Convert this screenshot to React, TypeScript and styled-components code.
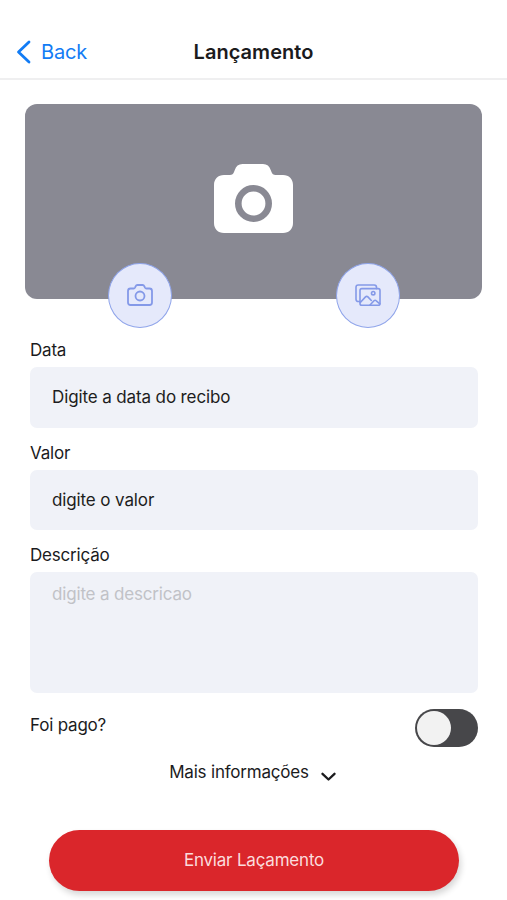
import React from "react";
import styled, { createGlobalStyle } from "styled-components";

const GlobalStyle = createGlobalStyle`
  * { box-sizing: border-box; }
  html, body { margin: 0; background: #fff; }
  body { font-family: Inter, "Liberation Sans", sans-serif; color: #1b1b1d; overflow: hidden; }
  button, input, textarea { font-family: inherit; }
`;

const Screen = styled.main`
  width: 507px;
  height: 900px;
  display: flex;
  flex-direction: column;
  overflow: hidden;
  background: #fff;
`;

const Header = styled.header`
  height: 80px;
  padding: 26px 16px 0;
  display: grid;
  grid-template-columns: 1fr auto 1fr;
  align-items: center;
  border-bottom: 2px solid #efeff0;
`;

const BackButton = styled.button`
  display: flex;
  align-items: center;
  gap: 10px;
  padding: 0;
  border: 0;
  background: none;
  color: #127cf5;
  font-size: 20px;
  letter-spacing: -0.15px;
  line-height: 26px;
`;

const Title = styled.h1`
  margin: 0;
  font-size: 20px;
  font-weight: 600;
  line-height: 26px;
  letter-spacing: 0.03px;
`;

const Photo = styled.section`
  position: relative;
  flex: none;
  height: 195px;
  margin: 24px 25px 0;
  border-radius: 12px;
  background: #898993;
  display: flex;
  justify-content: center;
  padding-top: 60px;
`;

const RoundButton = styled.button<{ $left: number }>`
  position: absolute;
  left: ${(p) => p.$left}px;
  top: 159px;
  width: 64px;
  height: 65px;
  padding: 0 0 1px;
  border: 1.5px solid #8fa4ea;
  border-radius: 50%;
  background: #e5e9fb;
  color: #8499e8;
  display: flex;
  align-items: center;
  justify-content: center;
`;

const Form = styled.form`
  padding: 41px 29px 0 30px;
  display: flex;
  flex-direction: column;
`;

const Field = styled.label`
  display: flex;
  flex-direction: column;
  gap: 6px;
  margin-bottom: 15px;
`;

const Caption = styled.span`
  font-size: 17px;
  line-height: 21px;
  letter-spacing: -0.2px;
`;

const Input = styled.input`
  width: 100%;
  height: 60.6px;
  padding: 0 22px;
  border: 0;
  border-radius: 7px;
  background: #f0f2f8;
  font-size: 17px;
  letter-spacing: -0.12px;
  &::placeholder { color: #1d1d20; opacity: 1; }
`;

const TextArea = styled.textarea`
  width: 100%;
  height: 121px;
  padding: 11px 22px;
  border: 0;
  border-radius: 7px;
  background: #f0f2f8;
  resize: none;
  font-size: 17px;
  line-height: 22px;
  letter-spacing: -0.17px;
  &::placeholder { color: #c1c2c7; opacity: 1; }
`;

const PaidRow = styled.div`
  display: flex;
  justify-content: space-between;
  height: 38px;
  margin-top: 0.6px;
`;

const PaidLabel = styled(Caption)`
  padding-top: 6px;
`;

const Toggle = styled.button`
  width: 63px;
  height: 38px;
  padding: 2px;
  border: 0;
  border-radius: 19px;
  background: #47474a;
`;

const Knob = styled.span`
  display: block;
  width: 34px;
  height: 34px;
  border-radius: 50%;
  background: #f2f2f2;
`;

const MoreButton = styled.button`
  align-self: center;
  display: flex;
  gap: 12px;
  margin: 15px 3px 0 0;
  padding: 0;
  border: 0;
  background: none;
  color: inherit;
  svg { margin-top: 10px; }
`;

const Submit = styled.button`
  height: 61px;
  margin: 47px 19px 0;
  padding: 0;
  border: 0;
  border-radius: 31px;
  background: #da262b;
  box-shadow: 2px 4px 6px rgba(0, 0, 0, 0.16);
  color: #fbdcdd;
  font-size: 17px;
  letter-spacing: -0.2px;
`;

export default function App() {
  return (
    <>
      <GlobalStyle />
      <Screen>
        <Header>
          <BackButton type="button">
            <svg width="15" height="24" viewBox="0 0 15 24" fill="none" stroke="currentColor" strokeWidth="2.8" strokeLinecap="round" strokeLinejoin="round">
              <path d="M13 2 2.5 12 13 22" />
            </svg>
            Back
          </BackButton>
          <Title>Lançamento</Title>
        </Header>
        <Photo>
          <svg width="79" height="69" viewBox="0 0 79 69">
            <path fill="#fff" d="M10 11h6c2 0 3.400-1 4-3l.8-2C22 2 24.500 0 28.500 0h20.500c4 0 6.500 2 7.700 6l.8 2c.6 2 2 3 4 3H69c6 0 10 4 10 10v38c0 6-4 10-10 10H10C4 69 0 65 0 59V21c0-6 4-10 10-10Z" />
            <circle cx="39.500" cy="39.500" r="15.200" fill="none" stroke="#898993" strokeWidth="6.600" />
          </svg>
          <RoundButton type="button" $left={82.500} aria-label="Camera">
            <svg width="26" height="22" viewBox="0 0 26 22" fill="none" stroke="currentColor" strokeWidth="1.800" strokeLinejoin="round">
              <path d="M3.500 4.500h3.200c.7 0 1-.3 1.300-.9l.6-1.300C9 1.400 9.500 1 10.400 1h5.200c.9 0 1.400.4 1.800 1.300l.6 1.300c.3.600.6.900 1.300.9h3.200c1.600 0 2.500.9 2.500 2.500v11.500c0 1.600-.9 2.500-2.500 2.500h-19C1.900 21 1 20.100 1 18.500V7c0-1.600.9-2.500 2.500-2.500Z" />
              <circle cx="13" cy="12" r="4.500" />
            </svg>
          </RoundButton>
          <RoundButton type="button" $left={311} aria-label="Galeria">
            <svg width="26" height="22" viewBox="0 0 26 22" fill="none" stroke="currentColor" strokeWidth="1.600" strokeLinecap="round" strokeLinejoin="round">
              <rect x="5" y="4.600" width="20" height="16.600" rx="1.800" />
              <path d="M5 17.500H3.500C2 17.500 1 16.700 1 15.200V3.200C1 1.800 1.800 1 3.200 1h16c1.500 0 2.300.8 2.300 2.300v1.300" />
              <circle cx="18.200" cy="9.200" r="1.700" />
              <path d="m5.300 18.500 5.200-5.600c.8-.8 1.600-.8 2.400 0l3.400 3.600M15 21l4-4.200c.8-.8 1.500-.8 2.300 0l3.500 3" />
            </svg>
          </RoundButton>
        </Photo>
        <Form>
          <Field>
            <Caption>Data</Caption>
            <Input placeholder="Digite a data do recibo" />
          </Field>
          <Field>
            <Caption>Valor</Caption>
            <Input placeholder="digite o valor" />
          </Field>
          <Field>
            <Caption>Descrição</Caption>
            <TextArea placeholder="digite a descricao" />
          </Field>
          <PaidRow>
            <PaidLabel>Foi pago?</PaidLabel>
            <Toggle type="button" role="switch" aria-checked={false} aria-label="Foi pago?">
              <Knob />
            </Toggle>
          </PaidRow>
          <MoreButton type="button">
            <Caption>Mais informações</Caption>
            <svg width="15" height="10" viewBox="0 0 15 10" fill="none" stroke="currentColor" strokeWidth="2.300" strokeLinecap="round" strokeLinejoin="round">
              <path d="m1.500 1.800 6 5.700 6-5.700" />
            </svg>
          </MoreButton>
          <Submit type="button">Enviar Laçamento</Submit>
        </Form>
      </Screen>
    </>
  );
}
